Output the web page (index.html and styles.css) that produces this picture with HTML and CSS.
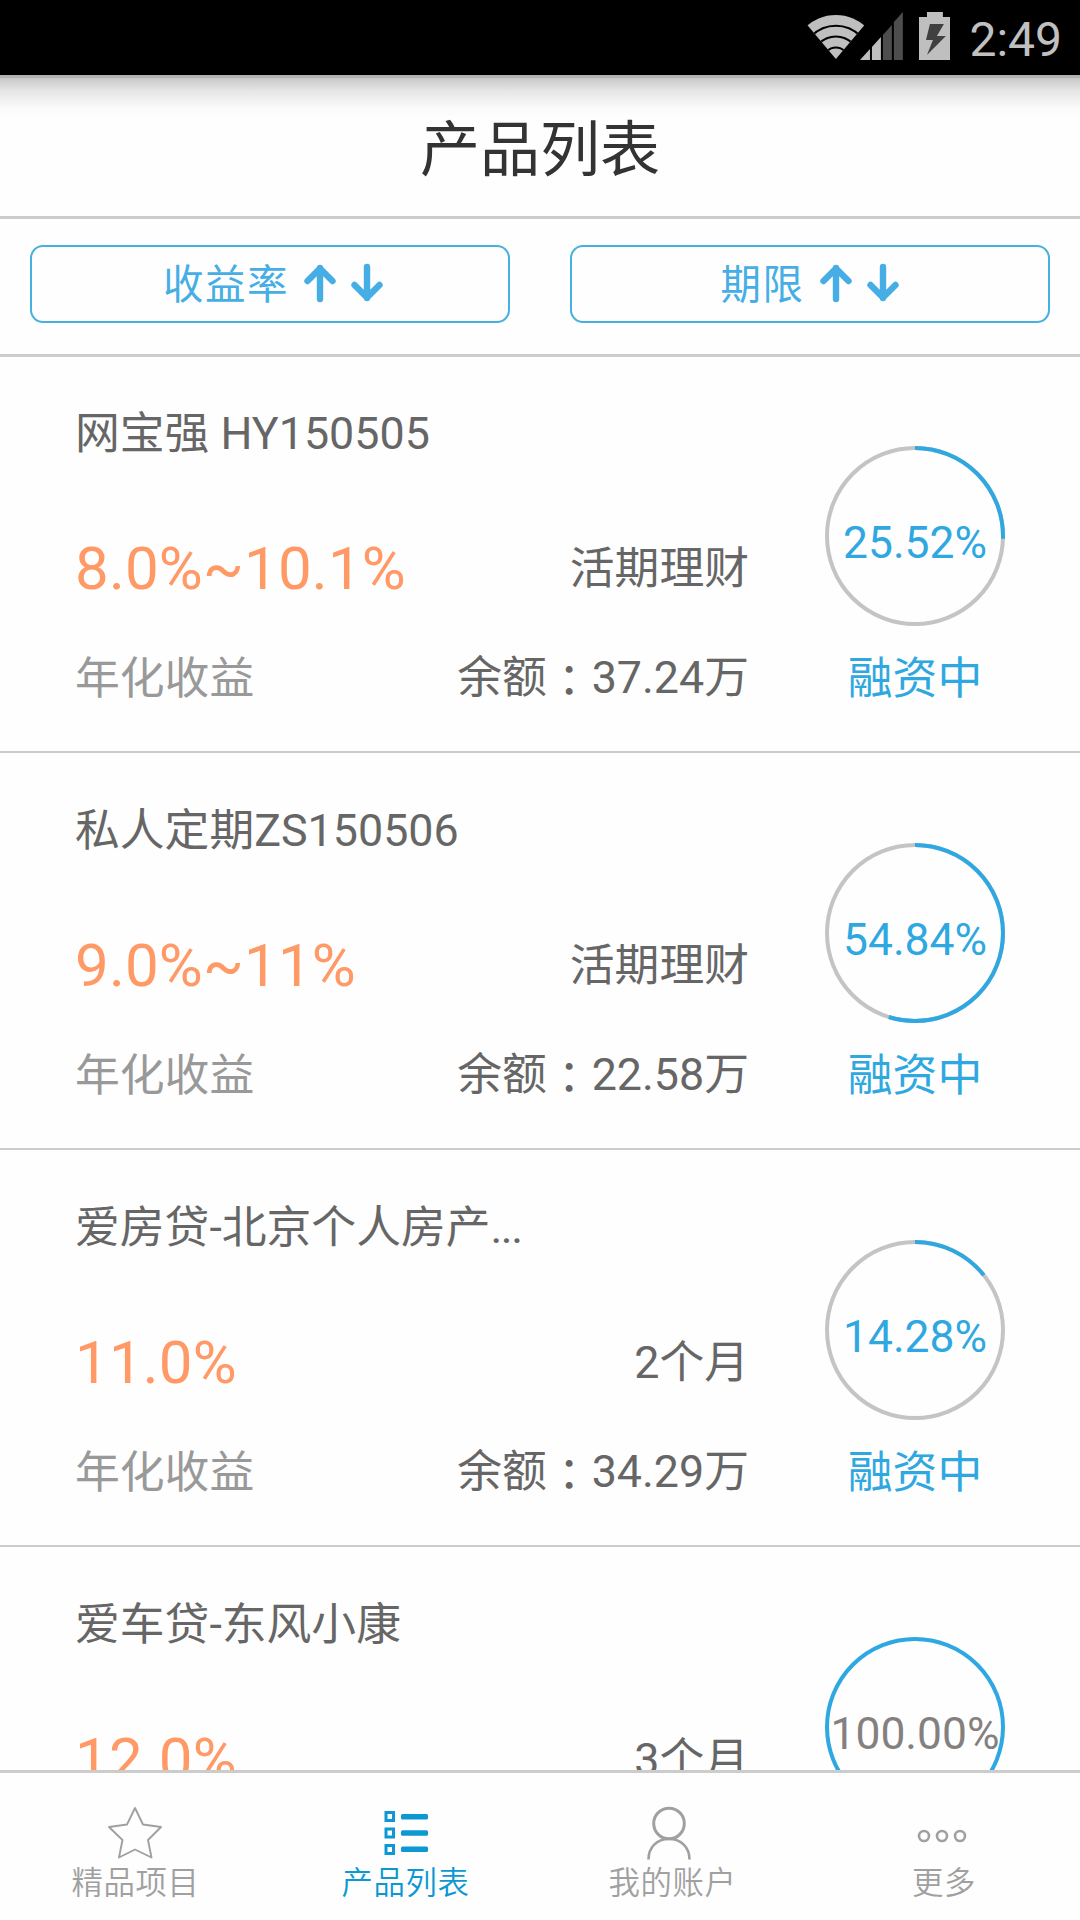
FILE: index.html
```html
<!DOCTYPE html>
<html lang="zh-CN">
<head>
<meta charset="utf-8">
<title>产品列表</title>
<link rel="stylesheet" href="styles.css">
</head>
<body>
<div class="app">
  <div class="status-bar">
    <svg class="wifi" width="60" height="46" viewBox="0 0 60 46">
      <defs><clipPath id="fan"><path d="M30 45L-2 7V-5H62V7Z"/></clipPath></defs>
      <g clip-path="url(#fan)">
        <circle cx="30" cy="46" r="45" fill="#bfbfbf"/>
        <g fill="none" stroke="#000" stroke-width="2"><circle cx="30" cy="46" r="34.3"/><circle cx="30" cy="46" r="23.5"/><circle cx="30" cy="46" r="12.5"/></g>
      </g>
    </svg>
    <svg class="signal" width="43" height="48" viewBox="0 0 43 48">
      <path fill="#bfbfbf" d="M0 48L10 37V48ZM12 35L21 25V48H12Z"/>
      <path fill="#4d4d4d" d="M23 23L32 13V48H23ZM34 10L43 0V48H34Z"/>
    </svg>
    <svg class="battery" width="32" height="48" viewBox="0 0 32 48">
      <path fill="#bfbfbf" d="M8 0H24V5H32V48H0V5H8Z"/>
      <path fill="#404040" d="M11 12H25L18 24H27L8 43L14 28H7Z"/>
    </svg>
    <span class="clock">2:49</span>
  </div>
  <header class="title-bar"><h1>产品列表</h1></header>
  <div class="filters">
    <button class="filter"><span>收益率</span>
      <svg width="80" height="40" viewBox="0 0 80 40"><path d="M17 36V5M4.500 18L17 5.500L29.500 18M64 4V35M51.500 22L64 34.500L76.500 22"/></svg>
    </button>
    <button class="filter term"><span>期限</span>
      <svg width="80" height="40" viewBox="0 0 80 40"><path d="M17 36V5M4.500 18L17 5.500L29.500 18M64 4V35M51.500 22L64 34.500L76.500 22"/></svg>
    </button>
  </div>
  <main class="list">
    <article class="item">
      <div class="info">
        <div class="name">网宝强 HY150505</div>
        <div class="row"><span class="rate">8.0%~10.1%</span><span>活期理财</span></div>
        <div class="row foot"><span class="label">年化收益</span><span>余额<i class="colon" lang="zh-TW">：</i>37.24万</span></div>
      </div>
      <div class="state">
        <svg class="ring" width="180" height="180" viewBox="0 0 180 180"><circle class="track" cx="90" cy="90" r="88"/><path class="arc" pathLength="100" stroke-dasharray="25.52 100" d="M90 2a88 88 0 0 1 0 176a88 88 0 0 1 0-176"/><text x="90" y="112">25.52%</text></svg>
        <div>融资中</div>
      </div>
    </article>
    <article class="item">
      <div class="info">
        <div class="name">私人定期ZS150506</div>
        <div class="row"><span class="rate">9.0%~11%</span><span>活期理财</span></div>
        <div class="row foot"><span class="label">年化收益</span><span>余额<i class="colon" lang="zh-TW">：</i>22.58万</span></div>
      </div>
      <div class="state">
        <svg class="ring" width="180" height="180" viewBox="0 0 180 180"><circle class="track" cx="90" cy="90" r="88"/><path class="arc" pathLength="100" stroke-dasharray="54.84 100" d="M90 2a88 88 0 0 1 0 176a88 88 0 0 1 0-176"/><text x="90" y="112">54.84%</text></svg>
        <div>融资中</div>
      </div>
    </article>
    <article class="item">
      <div class="info">
        <div class="name">爱房贷-北京个人房产<span class="more-dots">...</span></div>
        <div class="row"><span class="rate">11.0%</span><span>2个月</span></div>
        <div class="row foot"><span class="label">年化收益</span><span>余额<i class="colon" lang="zh-TW">：</i>34.29万</span></div>
      </div>
      <div class="state">
        <svg class="ring" width="180" height="180" viewBox="0 0 180 180"><circle class="track" cx="90" cy="90" r="88"/><path class="arc" pathLength="100" stroke-dasharray="14.28 100" d="M90 2a88 88 0 0 1 0 176a88 88 0 0 1 0-176"/><text x="90" y="112">14.28%</text></svg>
        <div>融资中</div>
      </div>
    </article>
    <article class="item">
      <div class="info">
        <div class="name">爱车贷-东风小康</div>
        <div class="row"><span class="rate">12.0%</span><span>3个月</span></div>
      </div>
      <div class="state done">
        <svg class="ring" width="180" height="180" viewBox="0 0 180 180"><circle class="arc" cx="90" cy="90" r="88"/><text x="90" y="112">100.00%</text></svg>
      </div>
    </article>
  </main>
  <nav class="tabs">
    <a class="tab">
      <svg width="60" height="60" viewBox="0 0 60 60" fill="none" stroke="#a0a0a0" stroke-width="1.900" stroke-linejoin="round"><path d="M30 5L38 21.500L56 24L43 37L46.500 54.500L30 46.500L14 54.500L17.500 37L4 24L22 21.500Z"/></svg>
      <span>精品项目</span>
    </a>
    <a class="tab active">
      <svg width="60" height="60" viewBox="0 0 60 60"><g fill="none" stroke="#0c98d2" stroke-width="3"><path d="M11 9.500H18.500V17.500H11ZM11 26H18.500V34H11ZM11 42.500H18.500V50.500H11Z"/></g><g fill="#0c98d2"><rect x="26" y="11" width="27" height="5.500" rx="1.500"/><rect x="26" y="27.300" width="27" height="5.500" rx="1.500"/><rect x="26" y="43.600" width="27" height="5.500" rx="1.500"/></g></svg>
      <span>产品列表</span>
    </a>
    <a class="tab account">
      <svg width="60" height="60" viewBox="0 0 60 60" fill="none" stroke="#a0a0a0" stroke-width="3"><circle cx="30" cy="20.500" r="15.300"/><path d="M9.500 56.500C9.500 44 18 36 30 36S50.500 44 50.500 56.500" stroke-width="2.600"/></svg>
      <span>我的账户</span>
    </a>
    <a class="tab more">
      <svg width="60" height="60" viewBox="0 0 60 60" fill="none" stroke="#a0a0a0" stroke-width="2.600"><circle cx="12" cy="33" r="5"/><circle cx="30" cy="33" r="5"/><circle cx="48" cy="33" r="5"/></svg>
      <span>更多</span>
    </a>
  </nav>
</div>
</body>
</html>
```
FILE: styles.css
```css
* { box-sizing: border-box; }

body {
  margin: 0;
  background: #fefefe;
  color: #666;
  font: 44.8px/60px Roboto, "Noto Sans CJK SC", sans-serif;
}

.app {
  display: flex;
  flex-direction: column;
  width: 1080px;
  height: 1920px;
  overflow: hidden;
}

.status-bar {
  display: flex;
  align-items: flex-start;
  height: 75px;
  padding: 12px 18px 0 806px;
  background: #000;
}
.wifi { margin-top: 2px; }
.signal { margin-left: -6px; }
.battery { margin-left: 16px; }
.clock {
  margin-left: 19px;
  color: #c0c0c0;
  font-size: 48px;
  line-height: 56px;
}

.title-bar {
  height: 144px;
  padding-top: 35px;
  border-top: 3px solid #b2b2b2;
  border-bottom: 3px solid #ccc;
  background: linear-gradient(#c8c8c8, #e6e6e6 13px, #fafafa 30px, #fefefe 40px) no-repeat;
}
h1 {
  margin: 0;
  color: #333;
  font-size: 60px;
  font-weight: 400;
  line-height: 76px;
  text-align: center;
}

.filters {
  display: grid;
  grid-template-columns: 480px 480px;
  gap: 60px;
  height: 138px;
  padding: 26px 30px 28px;
  border-bottom: 3px solid #ccc;
}
.filter {
  display: flex;
  align-items: center;
  justify-content: center;
  gap: 14px;
  height: 78px;
  padding: 0 0 2px 6px;
  border: 2px solid #46b0de;
  border-radius: 13px;
  background: none;
  color: #46aee4;
  font: 400 40.5px/60px "Noto Sans CJK SC", sans-serif;
  letter-spacing: 1.5px;
}
.filter span { padding-bottom: 2px; }
.term { padding: 0 1px 2px 0; }
.filter svg {
  fill: none;
  stroke: #46aee4;
  stroke-width: 6.4;
  stroke-linecap: round;
  stroke-linejoin: round;
}

.list {
  flex: 1;
  min-height: 0;
  margin-top: -1px;
  overflow: hidden;
}
.item {
  display: flex;
  justify-content: space-between;
  height: 397px;
  padding: 0 75px;
  border-bottom: 2px solid #ccc;
}
.info { width: 674px; padding-top: 48px; }
.row {
  display: flex;
  justify-content: space-between;
  align-items: center;
  height: 70px;
  margin-top: 70px;
}
.foot { height: 60px; margin-top: 44px; }
.rate { color: #ff9966; font-size: 60px; line-height: 70px; letter-spacing: 0.2px; }
.label { padding-top: 2px; color: #999; }
.more-dots { letter-spacing: -1.5px; }
.colon {
  font-family: "Noto Sans CJK TC", sans-serif;
  font-style: normal;
  line-height: 1px;
  vertical-align: -4px;
}
.state {
  width: 180px;
  padding-top: 90px;
  color: #2fa8e1;
  text-align: center;
}
.ring { display: block; margin-bottom: 23px; overflow: visible; }
.ring circle, .ring path { fill: none; stroke-width: 4; }
.ring .track { stroke: #c4c4c4; }
.ring .arc { stroke: #2fa8e1; }
.ring text { fill: #2fa8e1; font-size: 44.4px; text-anchor: middle; }
.done .ring text { fill: #858080; }

.tabs {
  display: grid;
  grid-template-columns: repeat(4, 1fr);
  height: 150px;
  border-top: 3px solid #ccc;
}
.tab {
  display: flex;
  flex-direction: column;
  align-items: center;
  padding-top: 30px;
  color: #a0a0a0;
  font: 350 31.4px/36px "Noto Sans CJK SC", sans-serif;
  letter-spacing: 0.6px;
}
.tab span { padding-left: 1px; }
.active { color: #0c98d2; }
.account { padding-right: 6px; }
.account svg { margin-right: 6px; }
.more { padding-right: 3px; }
.more svg { margin-right: 3px; }
```
